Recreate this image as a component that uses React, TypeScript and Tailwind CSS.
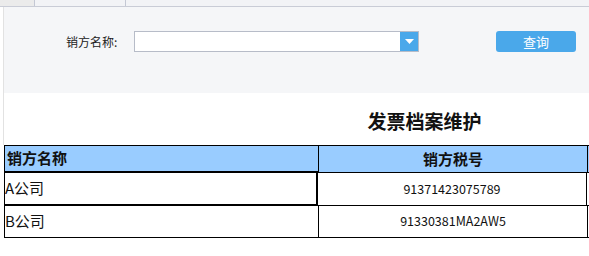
import React from "react";

export default function App() {
  const font = { fontFamily: '"Noto Sans CJK SC", "Noto Sans", sans-serif' };
  return (
    <div className="w-[589px] h-[256px] bg-white overflow-hidden" style={font}>
      {/* top tab strip */}
      <div className="flex h-[7px] border-b border-[#c9ccd6] bg-[#f2f3f6]">
        <div className="w-[34px] bg-[#ebebeb]" />
        <div className="w-[92px] border-l border-r border-[#c4c8d4] bg-[#f2f3f6]" />
        <div className="flex-1" />
      </div>
      <div className="flex">
        <div className="w-[3px]" />
        <div className="flex-1 border-l border-[#e2e2e2] min-w-0">
          {/* search area */}
          <div className="h-[86px] bg-[#f5f6f8] pt-[24px]">
            <div className="flex items-center h-[21px]">
              <div className="w-[62px]" />
              <span className="text-[12px] leading-none text-[#222] w-[68px]">销方名称:</span>
              <div className="w-[285px] h-[21px] border border-[#b7bcc8] bg-white flex justify-end">
                <div className="w-[18px] h-full bg-[#4aa8ea] flex items-center justify-center">
                  <svg width="9" height="5" viewBox="0 0 9 5">
                    <path d="M0 0 H9 L4.5 5 Z" fill="#fff" />
                  </svg>
                </div>
              </div>
              <div className="w-[77px]" />
              <button className="w-[80px] h-[21px] rounded-[3px] bg-[#4aa8ea] text-white text-[13px] leading-none flex items-center justify-center">
                查询
              </button>
            </div>
          </div>
          {/* title */}
          <div className="h-[52px] flex items-center justify-center pl-[256px]">
            <span className="text-[19px] leading-none font-bold text-[#111] pt-[2px]">发票档案维护</span>
          </div>
        </div>
      </div>
      {/* table */}
      <div className="pl-[4px]">
        <div className="flex h-[28px] border-t border-black bg-[#99ccff]">
          <div className="w-[314px] border-l border-black border-b-2 flex items-center pl-[2px] text-[15px] font-bold text-[#111]">
            销方名称
          </div>
          <div className="w-[269px] border-l border-black border-b flex items-center justify-center text-[15px] font-bold text-[#111]">
            销方税号
          </div>
          <div className="flex-1 border-l border-black border-b" />
        </div>
        <div className="flex h-[33px]">
          <div className="w-[314px] border-l border-black border-r-2 border-b-2 flex items-center text-[15px] text-[#111]">
            A公司
          </div>
          <div className="w-[268px] border-b border-black flex items-center justify-center text-[12.5px] text-[#111]">
            91371423075789
          </div>
          <div className="flex-1 border-l border-black border-b" />
        </div>
        <div className="flex h-[32px]">
          <div className="w-[314px] border-l border-black border-b flex items-center text-[15px] text-[#111]">
            B公司
          </div>
          <div className="w-[269px] border-l border-b border-black flex items-center justify-center text-[12.5px] text-[#111]">
            91330381MA2AW5
          </div>
          <div className="flex-1 border-l border-black border-b" />
        </div>
      </div>
    </div>
  );
}
